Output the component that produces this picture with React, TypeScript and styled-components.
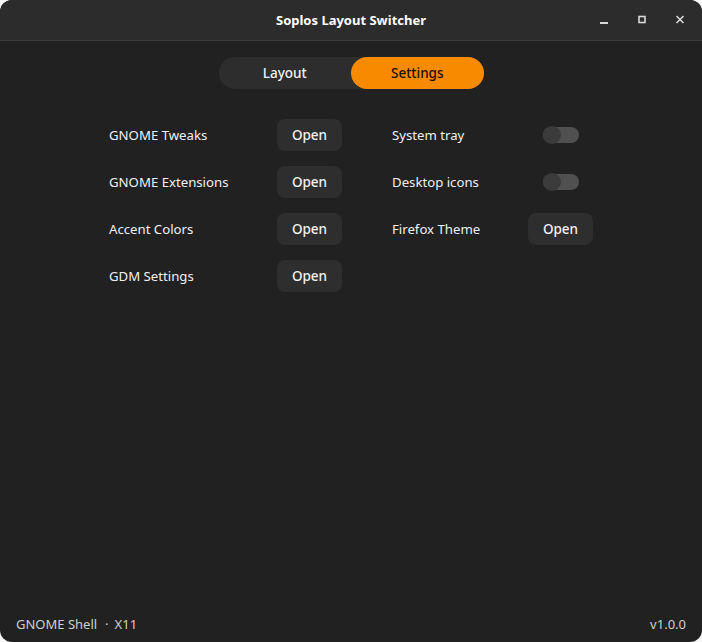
import { useState } from "react"
import styled, { createGlobalStyle } from "styled-components"

const Global = createGlobalStyle`
    html, body {
        margin: 0;
        padding: 0;
        background: #f7f7f7;
    }
    body {
        font-family: "Noto Sans", "Open Sans", sans-serif;
        -webkit-font-smoothing: antialiased;
    }
`

const Window = styled.div`
    width: 702px;
    height: 642px;
    display: flex;
    flex-direction: column;
    background: #212121;
    border-radius: 12px;
    overflow: hidden;
    color: #f2f2f2;
`

const HeaderBar = styled.header`
    height: 40px;
    flex-shrink: 0;
    display: grid;
    grid-template-columns: 1fr auto 1fr;
    align-items: center;
    background: #2c2c2c;
    border-bottom: 1px solid #3d3d3d;
`

const Title = styled.h1`
    grid-column: 2;
    margin: 0;
    font-size: 13px;
    font-weight: 700;
    color: #ffffff;
`

const Controls = styled.div`
    grid-column: 3;
    justify-self: end;
    display: flex;
    align-items: center;
    gap: 4px;
    padding-right: 5px;
`

const ControlButton = styled.button`
    width: 34px;
    height: 34px;
    display: flex;
    align-items: center;
    justify-content: center;
    background: none;
    border: 0;
    padding: 0;
    color: #d8d8d8;
`

const Content = styled.main`
    flex: 1;
    display: flex;
    flex-direction: column;
    align-items: center;
    padding-top: 16px;
`

const Switcher = styled.div`
    display: flex;
    width: 265px;
    height: 32px;
    border-radius: 16px;
    background: #2d2d2d;
`

const Segment = styled.button<{ $active?: boolean }>`
    flex: 1;
    border: 0;
    border-radius: 16px;
    font-family: inherit;
    font-size: 13.5px;
    font-weight: 500;
    background: ${p => (p.$active ? "#f88a00" : "transparent")};
    color: ${p => (p.$active ? "#1c1000" : "#f2f2f2")};
`

const SettingsGrid = styled.div`
    margin-top: 30px;
    display: grid;
    grid-template-columns: 168px 65px 136px 65px;
    width: 484px;
`

const Column = styled.div`
    display: grid;
    grid-template-columns: subgrid;
    grid-column: span 2;
    grid-auto-rows: 32px;
    row-gap: 15px;
    align-content: start;
    &:last-child {
        padding-left: 50px;
        grid-template-columns: 136px 65px;
    }
`

const Row = styled.div`
    display: contents;
`

const Label = styled.span`
    align-self: center;
    font-size: 13.2px;
    color: #f0f0f0;
`

const OpenButton = styled.button`
    height: 32px;
    width: 65px;
    border: 0;
    border-radius: 8px;
    background: #2e2e2e;
    color: #f2f2f2;
    font-family: inherit;
    font-size: 13.5px;
    font-weight: 500;
`

const Toggle = styled.button`
    justify-self: center;
    align-self: center;
    position: relative;
    width: 36px;
    height: 16px;
    border: 0;
    padding: 0;
    border-radius: 8px;
    background: #505050;
    &::after {
        content: "";
        position: absolute;
        left: 0;
        top: -1px;
        width: 18px;
        height: 18px;
        border-radius: 50%;
        background: #3b3b3b;
    }
`

const Footer = styled.footer`
    display: flex;
    justify-content: space-between;
    align-items: center;
    padding: 0 16px 9px 16px;
    font-size: 13px;
    color: #cfcfcf;
`

const Dot = styled.span`
    margin: 0 6px 0 8px;
`

const leftItems = ["GNOME Tweaks", "GNOME Extensions", "Accent Colors", "GDM Settings"]

export default function App() {
    const [tab, setTab] = useState("settings")

    return (
        <>
            <Global />
            <Window>
                <HeaderBar>
                    <Title>Soplos Layout Switcher</Title>
                    <Controls>
                        <ControlButton aria-label="Minimize">
                            <svg width="10" height="10" viewBox="0 0 10 10">
                                <rect x="1" y="7" width="8" height="2" fill="currentColor" />
                            </svg>
                        </ControlButton>
                        <ControlButton aria-label="Maximize">
                            <svg width="10" height="10" viewBox="0 0 10 10">
                                <rect x="2" y="1.5" width="6" height="6" fill="none" stroke="currentColor" strokeWidth="1.6" />
                            </svg>
                        </ControlButton>
                        <ControlButton aria-label="Close">
                            <svg width="10" height="10" viewBox="0 0 10 10">
                                <path d="M1.5 1L8.5 8M8.5 1L1.5 8" stroke="currentColor" strokeWidth="1.6" />
                            </svg>
                        </ControlButton>
                    </Controls>
                </HeaderBar>
                <Content>
                    <Switcher>
                        <Segment $active={tab === "layout"} onClick={() => setTab("layout")}>Layout</Segment>
                        <Segment $active={tab === "settings"} onClick={() => setTab("settings")}>Settings</Segment>
                    </Switcher>
                    <SettingsGrid>
                        <Column>
                            {leftItems.map(item => (
                                <Row key={item}>
                                    <Label>{item}</Label>
                                    <OpenButton>Open</OpenButton>
                                </Row>
                            ))}
                        </Column>
                        <Column>
                            <Row>
                                <Label>System tray</Label>
                                <Toggle aria-label="System tray" />
                            </Row>
                            <Row>
                                <Label>Desktop icons</Label>
                                <Toggle aria-label="Desktop icons" />
                            </Row>
                            <Row>
                                <Label>Firefox Theme</Label>
                                <OpenButton>Open</OpenButton>
                            </Row>
                        </Column>
                    </SettingsGrid>
                </Content>
                <Footer>
                    <span>GNOME Shell<Dot>·</Dot>X11</span>
                    <span>v1.0.0</span>
                </Footer>
            </Window>
        </>
    )
}
